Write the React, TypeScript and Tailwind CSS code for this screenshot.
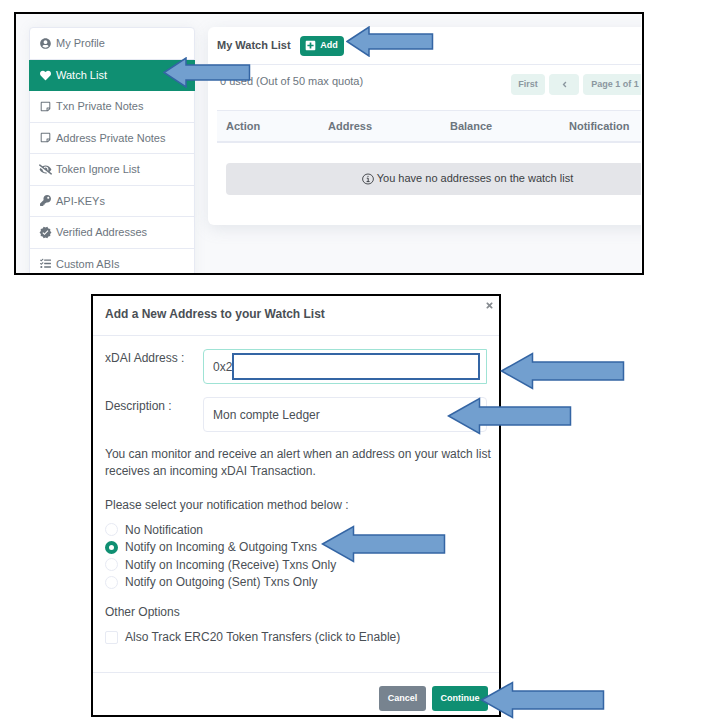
import type { ComponentType } from "react";
import { FaUserCircle, FaHeart, FaRegStickyNote, FaEyeSlash, FaKey, FaPlusSquare, FaTimes, FaAngleLeft, FaTasks } from "react-icons/fa";
import { MdVerified } from "react-icons/md";

type NavItem = { label: string; icon: ComponentType<{ className?: string }>; active?: boolean; wide?: boolean };

const navItems: NavItem[] = [
  { label: "My Profile", icon: FaUserCircle },
  { label: "Watch List", icon: FaHeart, active: true },
  { label: "Txn Private Notes", icon: FaRegStickyNote },
  { label: "Address Private Notes", icon: FaRegStickyNote },
  { label: "Token Ignore List", icon: FaEyeSlash, wide: true },
  { label: "API-KEYs", icon: FaKey },
  { label: "Verified Addresses", icon: MdVerified, wide: true },
  { label: "Custom ABIs", icon: FaTasks },
];

const methods = [
  "No Notification",
  "Notify on Incoming & Outgoing Txns",
  "Notify on Incoming (Receive) Txns Only",
  "Notify on Outgoing (Sent) Txns Only",
];

function InfoIcon({ className }: { className: string }) {
  return (
    <svg aria-hidden="true" viewBox="0 0 12 12" fill="none" stroke="currentColor" className={className}>
      <ellipse cx="6" cy="6" rx="5.400" ry="5" strokeWidth="0.900" />
      <path d="M4.800 5.200H6.200V8.500M4.600 8.600H7.600M5.500 3.400H6.500" strokeWidth="1" />
    </svg>
  );
}

function SmallArrow({ className }: { className: string }) {
  return (
    <svg aria-hidden="true" viewBox="0 0 88 31" className={`absolute h-[31px] w-[88px] ${className}`}>
      <path d="M1 15.5 23 1v7h63.500v15H23v7z" fill="#729fcf" stroke="#3465a4" strokeWidth="1.500" />
    </svg>
  );
}

function LargeArrow({ className }: { className: string }) {
  return (
    <svg aria-hidden="true" viewBox="0 0 125 38" className={`absolute h-[38px] w-[125px] ${className}`}>
      <path d="M1.500 19 32.500 1.500v8.500h91v18h-91v8.500z" fill="#729fcf" stroke="#3465a4" strokeWidth="1.500" />
    </svg>
  );
}

function WatchListPage() {
  return (
    <section className="relative ml-[14px] mr-[62px] border-2 border-black bg-white pr-px">
      <div className="flex h-[259px] items-start gap-[13px] overflow-hidden bg-[#f8f9fb] pl-[13px] pt-[13px] text-[11px] text-[#6c757e]">
        <nav className="grid h-[254px] w-[166px] shrink-0 auto-rows-fr rounded-t border border-[#e7eaf3] bg-white shadow-[0_0_12px_rgba(140,152,164,0.1)]">
          {navItems.map(({ label, icon: Icon, active, wide }) => (
            <a
              key={label}
              href="#"
              className={
                active
                  ? "-mx-px flex items-center gap-[5px] bg-[#0f8f72] pl-[11px] text-white"
                  : "flex items-center gap-[5px] border-b border-[#e7eaf3] pl-2.5"
              }
            >
              <span className="flex w-[11px] shrink-0 justify-center">
                <Icon className={wide ? "size-[13px] shrink-0" : "size-[11px] shrink-0"} />
              </span>
              {label}
            </a>
          ))}
        </nav>
        <main className="min-h-[198px] w-[519px] shrink-0 rounded-md bg-white shadow-[0_4px_16px_rgba(140,152,164,0.18)]">
          <header className="flex h-[38px] items-center gap-[9px] border-b border-[#e7eaf3] px-[9px]">
            <h1 className="text-[11px] font-bold text-[#4a4f55]">My Watch List</h1>
            <button className="flex h-5 w-[44px] items-center justify-center gap-1 rounded bg-[#0f8f72] text-[9px] font-bold text-white">
              <FaPlusSquare className="size-[11px]" />
              Add
            </button>
          </header>
          <div className="flex items-start px-3 pt-[9px]">
            <p className="w-[291px] text-[11px] leading-[15px]">0 used (Out of 50 max quota)</p>
            <div className="flex h-[21px] gap-1 text-[9px] font-bold text-[#8b979f]">
              <button className="w-[34px] rounded bg-[#e6f3f0]">First</button>
              <button aria-label="Previous page" className="flex w-[30px] items-center justify-center rounded bg-[#e6f3f0]">
                <FaAngleLeft className="size-[9px]" />
              </button>
              <button className="w-[64px] rounded bg-[#e6f3f0]">Page 1 of 1</button>
            </div>
          </div>
          <div className="px-[9px] pt-[15px]">
            <table className="w-full table-fixed text-left">
              <thead>
                <tr className="h-[31px] border-t border-b-2 border-t-[#e7eaf3] border-b-[#e7eaf3] bg-[#f8fafd]">
                  <th className="w-[102px] px-[9px] font-bold">Action</th>
                  <th className="w-[122px] px-[9px] font-bold">Address</th>
                  <th className="w-[119px] px-[9px] font-bold">Balance</th>
                  <th className="px-[9px] font-bold">Notification</th>
                </tr>
              </thead>
              <tbody>
                <tr>
                  <td colSpan={4} className="px-[9px] pt-[20px]">
                    <div className="flex h-8 items-center justify-center gap-[3px] rounded bg-[#e4e5e9] text-[11px] text-[#3b3e43]">
                      <InfoIcon className="size-3" />
                      You have no addresses on the watch list
                    </div>
                  </td>
                </tr>
              </tbody>
            </table>
          </div>
        </main>
      </div>
      <SmallArrow className="left-[330px] top-[12px]" />
      <SmallArrow className="left-[147px] top-[43px]" />
    </section>
  );
}

function AddAddressDialog() {
  return (
    <section
      role="dialog"
      aria-labelledby="dialog-title"
      className="relative ml-[91px] mr-[205px] mt-[19px] border-2 border-black bg-white text-[12px] text-[#4a4f55]"
    >
      <header className="flex h-10 items-center justify-between border-b border-[#e7eaf3] pl-3 pr-[5px]">
        <h2 id="dialog-title" className="pb-1 text-[12px] font-bold">Add a New Address to your Watch List</h2>
        <button aria-label="Close" className="self-start pt-[5px] text-[#868b90]">
          <FaTimes className="size-[9px]" />
        </button>
      </header>
      <form className="px-3 pt-[13px]">
        <div className="flex items-start">
          <label htmlFor="address" className="w-[98px] shrink-0 leading-[18px]">xDAI Address :</label>
          <div className="relative grow">
            <input id="address" defaultValue="0x2" className="block h-[35px] w-full rounded-l border border-[#9fe3d5] px-[9px] outline-none" />
            <div className="absolute inset-y-1 left-[29px] right-[7px] border-2 border-[#3465a4] bg-white" />
          </div>
        </div>
        <div className="mt-[13px] flex items-start">
          <label htmlFor="description" className="w-[98px] shrink-0 leading-[18px]">Description :</label>
          <input id="description" defaultValue="Mon compte Ledger" className="block h-[35px] min-w-0 grow rounded border border-[#e7eaf3] px-[9px] outline-none" />
        </div>
        <p className="mt-[14px] whitespace-nowrap leading-[17px]">
          You can monitor and receive an alert when an address on your watch list
          <br />
          receives an incoming xDAI Transaction.
        </p>
        <fieldset className="mt-[17px]">
          <legend className="leading-[17px]">Please select your notification method below :</legend>
          <div className="mt-[7px] grid h-[70px] auto-rows-fr">
            {methods.map((method, index) => (
              <label key={method} className="flex items-center gap-[7px]">
                <input
                  type="radio"
                  name="method"
                  defaultChecked={index === 1}
                  className="size-[13px] appearance-none rounded-full border border-[#e7eaf3] bg-white checked:border-4 checked:border-[#0f8f72]"
                />
                {method}
              </label>
            ))}
          </div>
        </fieldset>
        <p className="mt-[13px] leading-[17px]">Other Options</p>
        <label className="mt-[7px] flex h-[18px] items-center gap-[7px]">
          <input type="checkbox" className="size-[13px] appearance-none rounded-xs border border-[#e7eaf3] bg-white" />
          Also Track ERC20 Token Transfers (click to Enable)
        </label>
      </form>
      <footer className="mt-[26px] flex justify-end gap-1.5 border-t border-[#e7eaf3] pb-1 pr-[11px] pt-[13px] text-[9px] font-bold text-white">
        <button className="h-[25px] w-[47px] rounded-[3px] bg-[#77838f]">Cancel</button>
        <button className="h-[25px] w-[56px] rounded-[3px] bg-[#0f8f72]">Continue</button>
      </footer>
      <LargeArrow className="left-[407px] top-[56px]" />
      <LargeArrow className="left-[354px] top-[101px]" />
      <LargeArrow className="left-[228px] top-[229px]" />
      <LargeArrow className="left-[387px] top-[385px]" />
    </section>
  );
}

export default function App() {
  return (
    <div className="bg-white pb-[7px] pt-[12px] font-['Liberation_Sans',Arial,sans-serif]">
      <WatchListPage />
      <AddAddressDialog />
    </div>
  );
}
